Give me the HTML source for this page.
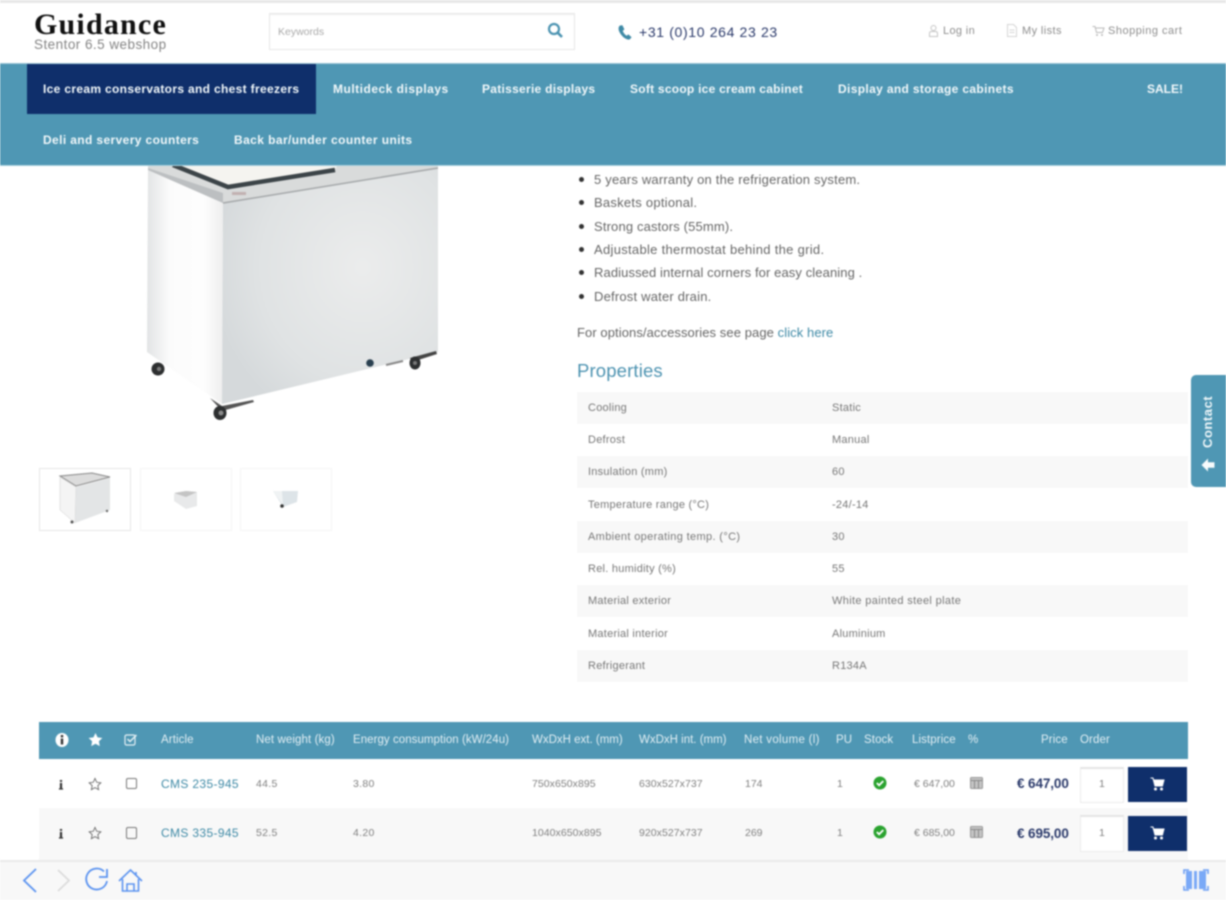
<!DOCTYPE html>
<html lang="en">
<head>
<meta charset="utf-8">
<title>Guidance - Stentor 6.5 webshop</title>
<style>
html,body{margin:0;padding:0;background:#fff;}
body{width:1226px;height:900px;overflow:hidden;position:relative;font-family:"Liberation Sans",sans-serif;color:#555;}
#page{position:absolute;left:0;top:0;width:1226px;height:900px;filter:blur(.75px);overflow:hidden;}
.a{position:absolute;white-space:nowrap;line-height:1;}
.box{position:absolute;}
.nav{color:#f2f8fa;font-weight:bold;font-size:12px;}
.gray{color:#8e8e8e;font-size:11px;}
.li{color:#666;font-size:13px;letter-spacing:.06px;}
.dot{position:absolute;left:579px;width:5px;height:5px;border-radius:50%;background:#333;}
.row{position:absolute;left:577px;width:611px;height:32px;background:#f8f8f8;}
.k,.v{color:#777;font-size:11px;letter-spacing:.25px;}
.th{color:#e3eff4;font-size:11.5px;letter-spacing:.1px;}
.td{color:#808080;font-size:10.5px;}
.link{color:#3f8aa6;}
</style>
</head>
<body>
<div id="page">
  <div class="box" style="left:0;top:0;width:1226px;height:3px;background:#e8e8e8"></div>

  <!-- Header -->
  <div class="a" style="left:34px;top:10px;font-family:'Liberation Serif',serif;font-weight:bold;font-size:30px;color:#111;letter-spacing:1.2px">Guidance</div>
  <div class="a" style="left:34px;top:38px;font-size:13.5px;color:#858585;letter-spacing:.46px">Stentor 6.5 webshop</div>

  <div class="box" style="left:269px;top:13px;width:304px;height:35px;border:1px solid #e8e8e8;box-shadow:inset 0 1px 1px #eee"></div>
  <div class="a" style="left:278px;top:27px;font-size:10.5px;color:#aaa">Keywords</div>
  <svg class="box" style="left:546px;top:21px" width="18" height="18" viewBox="0 0 18 18"><circle cx="8" cy="8" r="5" fill="none" stroke="#4b93b1" stroke-width="2.2"/><path d="M11.800 11.800L16 16" stroke="#4b93b1" stroke-width="2.600"/></svg>

  <svg class="box" style="left:617px;top:24px" width="17" height="17" viewBox="0 0 17 17"><path d="M3 1.500C1 3 1 6 3.600 10c2.600 3.600 6 6 9 5.500l2-2.300-3.200-2.800-1.800 1.400C8 10.800 6.500 9 5.700 6.900L7.400 5.400 5.400 1.200z" fill="#3f8aa6"/></svg>
  <div class="a" style="left:639px;top:25px;font-size:14px;color:#2b3a6b;letter-spacing:.65px">+31 (0)10 264 23 23</div>

  <svg class="box" style="left:928px;top:25px" width="11" height="12" viewBox="0 0 11 12"><circle cx="5.500" cy="3" r="2.500" fill="none" stroke="#c5c5c5"/><path d="M1.500 11.500V8.500q0-2 2-2h4q2 0 2 2v3z" fill="none" stroke="#c5c5c5"/></svg>
  <div class="a gray" style="left:943px;top:26px;letter-spacing:.35px">Log in</div>
  <svg class="box" style="left:1006px;top:24px" width="12" height="13" viewBox="0 0 12 13"><path d="M1.500.5h6l3 3v9h-9zM3.500 6h5M3.500 8.500h5" fill="none" stroke="#d5d5d5"/></svg>
  <div class="a gray" style="left:1022px;top:26px;letter-spacing:.4px">My lists</div>
  <svg class="box" style="left:1092px;top:25px" width="13" height="12" viewBox="0 0 13 12"><path d="M.5 1.500h2.500l1.500 6h6l1.500-4.500h-9" fill="none" stroke="#bbb"/><circle cx="5" cy="10" r="1" fill="#bbb"/><circle cx="10" cy="10" r="1" fill="#bbb"/></svg>
  <div class="a gray" style="left:1108px;top:26px;letter-spacing:.5px">Shopping cart</div>

  <!-- Product image -->
  <svg class="box" style="left:130px;top:150px" width="330" height="285" viewBox="130 150 330 285">
    <defs>
      <linearGradient id="lf" x1="0" x2="1" y1="0" y2="0"><stop offset="0" stop-color="#e2e4e5"/><stop offset=".3" stop-color="#fbfbfb"/><stop offset=".75" stop-color="#fdfdfd"/><stop offset="1" stop-color="#eeeeee"/></linearGradient>
      <radialGradient id="rf" cx=".65" cy=".42" r=".7"><stop offset="0" stop-color="#ebecec"/><stop offset=".7" stop-color="#dfe2e3"/><stop offset="1" stop-color="#d5d9db"/></radialGradient>
    </defs>
    <path d="M148 170L223 203 222 404 147 352z" fill="url(#lf)"/>
    <path d="M223 203L438 168V352L222 404z" fill="url(#rf)"/>
    <path d="M148 160H438V168L223 203 148 170z" fill="#d9dbdb"/>
    <path d="M148 168L223 193V203L148 170z" fill="#bcbfc1"/>
    <path d="M223 203L438 168" fill="none" stroke="#a5a8aa" stroke-width="1.500"/>
    <path d="M165 160H340L335 170 228 186z" fill="#f5f4f0"/>
    <path d="M173 165L228 187 335 170" fill="none" stroke="#3c4448" stroke-width="4.500"/>
    <rect x="232" y="192" width="14" height="3" fill="#a88" opacity=".5"/>
    <path d="M210 398L222 406 253 400 254 402 222 411z" fill="#555"/>
    <ellipse cx="220" cy="413" rx="6.500" ry="7" fill="#2d2f30"/><circle cx="221" cy="413" r="2.500" fill="#8a8a8a"/>
    <ellipse cx="158" cy="369" rx="6.500" ry="6.500" fill="#2d2f30"/><circle cx="159" cy="369" r="2.200" fill="#7a7a7a"/>
    <path d="M410 358L436 351 437 354 412 362z" fill="#444"/>
    <ellipse cx="415" cy="363" rx="5.500" ry="6.500" fill="#2d2f30"/><circle cx="415" cy="363" r="2" fill="#777"/>
    <circle cx="370" cy="363" r="3.800" fill="#2a4050"/>
    <path d="M386 365L403 361" stroke="#888" stroke-width="2"/>
  </svg>

  <!-- Thumbnails -->
  <div class="box" style="left:39px;top:468px;width:90px;height:61px;border:1px solid #e6e6e6"></div>
  <div class="box" style="left:140px;top:468px;width:90px;height:61px;border:1px solid #f5f5f5"></div>
  <div class="box" style="left:240px;top:468px;width:90px;height:61px;border:1px solid #f5f5f5"></div>
  <svg class="box" style="left:55px;top:470px" width="60" height="58" viewBox="55 470 60 58">
    <path d="M60 476L76 486 110 477 92 473z" fill="#dcdcdc" stroke="#888" stroke-width="1"/>
    <path d="M60 477L76 487 75 523 60 510z" fill="#f4f4f4" stroke="#ccc" stroke-width=".5"/>
    <path d="M76 487L110 478V510L75 523z" fill="#e3e5e6"/>
    <circle cx="72" cy="522" r="1.500" fill="#555"/><circle cx="107" cy="511" r="1.200" fill="#666"/>
  </svg>
  <svg class="box" style="left:170px;top:485px" width="30" height="30" viewBox="170 485 30 30">
    <path d="M174 494L186 491 197 492 197 506 186 509 174 501z" fill="#e8e9ea"/>
    <path d="M174 493L186 491 197 492 186 497z" fill="#c4c4c4"/>
  </svg>
  <svg class="box" style="left:270px;top:485px" width="30" height="30" viewBox="270 485 30 30">
    <path d="M273 491H298L297 502 283 507z" fill="#dde4e8"/>
    <path d="M273 491H282L283 505z" fill="#f0f3f4"/>
    <circle cx="282" cy="506" r="1.800" fill="#333"/>
  </svg>

  <!-- Description list -->
  <div class="dot" style="top:177px"></div><div class="a li" style="left:594px;top:173px;letter-spacing:.2px">5 years warranty on the refrigeration system.</div>
  <div class="dot" style="top:200px"></div><div class="a li" style="left:594px;top:196px;letter-spacing:.25px">Baskets optional.</div>
  <div class="dot" style="top:224px"></div><div class="a li" style="left:594px;top:220px;letter-spacing:.15px">Strong castors (55mm).</div>
  <div class="dot" style="top:247px"></div><div class="a li" style="left:594px;top:243px;letter-spacing:.3px">Adjustable thermostat behind the grid.</div>
  <div class="dot" style="top:270px"></div><div class="a li" style="left:594px;top:266px;letter-spacing:.1px">Radiussed internal corners for easy cleaning .</div>
  <div class="dot" style="top:294px"></div><div class="a li" style="left:594px;top:290px;letter-spacing:.2px">Defrost water drain.</div>
  <div class="a li" style="left:577px;top:326px;letter-spacing:.08px">For options/accessories see page <span class="link">click here</span></div>
  <div class="a" style="left:577px;top:362px;font-size:18.5px;color:#4d93b1;letter-spacing:.15px">Properties</div>

  <!-- Properties -->
  <div class="row" style="top:392px"></div>
  <div class="row" style="top:456px"></div>
  <div class="row" style="top:521px"></div>
  <div class="row" style="top:585px"></div>
  <div class="row" style="top:650px"></div>
  <div class="a k" style="left:588px;top:403px">Cooling</div><div class="a v" style="left:832px;top:403px">Static</div>
  <div class="a k" style="left:588px;top:435px">Defrost</div><div class="a v" style="left:832px;top:435px">Manual</div>
  <div class="a k" style="left:588px;top:467px">Insulation (mm)</div><div class="a v" style="left:832px;top:467px">60</div>
  <div class="a k" style="left:588px;top:500px">Temperature range (°C)</div><div class="a v" style="left:832px;top:500px">-24/-14</div>
  <div class="a k" style="left:588px;top:532px;letter-spacing:.35px">Ambient operating temp. (°C)</div><div class="a v" style="left:832px;top:532px">30</div>
  <div class="a k" style="left:588px;top:564px">Rel. humidity (%)</div><div class="a v" style="left:832px;top:564px">55</div>
  <div class="a k" style="left:588px;top:596px">Material exterior</div><div class="a v" style="left:832px;top:596px;letter-spacing:.35px">White painted steel plate</div>
  <div class="a k" style="left:588px;top:629px">Material interior</div><div class="a v" style="left:832px;top:629px">Aluminium</div>
  <div class="a k" style="left:588px;top:661px">Refrigerant</div><div class="a v" style="left:832px;top:661px">R134A</div>

  <!-- Table -->
  <div class="box" style="left:39px;top:722px;width:1149px;height:37px;background:#4f97b4"></div>
  <div class="box" style="left:39px;top:808px;width:1149px;height:52px;background:#f8f8f8"></div>

  <svg class="box" style="left:54px;top:732px" width="16" height="16" viewBox="0 0 16 16"><ellipse cx="8" cy="8" rx="6.500" ry="7" fill="#fff"/><rect x="6.800" y="3" width="2.400" height="2.400" fill="#333"/><rect x="6.800" y="6.500" width="2.400" height="6" fill="#333"/></svg>
  <svg class="box" style="left:88px;top:732px" width="15" height="15" viewBox="0 0 24 24"><path d="M12 1.500l3.300 7 7.700 1-5.600 5.300 1.400 7.700L12 18.800l-6.800 3.700 1.400-7.700L1 9.500l7.700-1z" fill="#fff"/></svg>
  <svg class="box" style="left:124px;top:733px" width="14" height="13" viewBox="0 0 14 13"><rect x="1" y="2" width="10" height="10" rx="1.500" fill="none" stroke="#e6f1f5" stroke-width="1.200"/><path d="M3.500 6l2.500 2.500L12.500 2" fill="none" stroke="#e6f1f5" stroke-width="1.500"/></svg>

  <div class="a th" style="left:161px;top:735px">Article</div>
  <div class="a th" style="left:256px;top:735px">Net weight (kg)</div>
  <div class="a th" style="left:353px;top:735px;letter-spacing:.05px">Energy consumption (kW/24u)</div>
  <div class="a th" style="left:532px;top:735px;letter-spacing:0">WxDxH ext. (mm)</div>
  <div class="a th" style="left:639px;top:735px;letter-spacing:0">WxDxH int. (mm)</div>
  <div class="a th" style="left:744px;top:735px;letter-spacing:.3px">Net volume (l)</div>
  <div class="a th" style="left:836px;top:735px">PU</div>
  <div class="a th" style="left:864px;top:735px">Stock</div>
  <div class="a th" style="left:912px;top:735px">Listprice</div>
  <div class="a th" style="left:968px;top:735px">%</div>
  <div class="a th" style="left:1041px;top:735px">Price</div>
  <div class="a th" style="left:1080px;top:735px">Order</div>

  <!-- Row 1 -->
  <svg class="box" style="left:58px;top:780px" width="6" height="10" viewBox="0 0 7 12"><rect x="2.200" y="0" width="2.600" height="2.200" fill="#333"/><rect x="2.200" y="3.500" width="2.600" height="7" fill="#333"/><rect x="1" y="10" width="5" height="1.500" fill="#333"/></svg>
  <svg class="box" style="left:88px;top:777px" width="14" height="14" viewBox="0 0 24 24"><path d="M12 2.500l3 6.500 7 .9-5.100 4.800 1.300 7L12 18.300l-6.200 3.400 1.300-7L2 9.900 9 9z" fill="none" stroke="#666" stroke-width="1.500"/></svg>
  <div class="box" style="left:126px;top:778px;width:9px;height:9px;border:1px solid #777;border-radius:2px"></div>
  <div class="a link" style="left:161px;top:778px;font-size:12px;letter-spacing:.35px">CMS 235-945</div>
  <div class="a td" style="left:256px;top:779px;letter-spacing:.3px">44.5</div>
  <div class="a td" style="left:353px;top:779px;letter-spacing:.3px">3.80</div>
  <div class="a td" style="left:532px;top:779px;letter-spacing:.05px">750x650x895</div>
  <div class="a td" style="left:639px;top:779px;letter-spacing:.05px">630x527x737</div>
  <div class="a td" style="left:745px;top:779px">174</div>
  <div class="a td" style="left:837px;top:779px">1</div>
  <svg class="box" style="left:873px;top:776px" width="14" height="14" viewBox="0 0 14 14"><circle cx="7" cy="7" r="6.500" fill="#2aa32f"/><path d="M3.800 7l2.300 2.300 4.200-4.300" fill="none" stroke="#fff" stroke-width="1.800"/></svg>
  <div class="a td" style="left:914px;top:779px">€ 647,00</div>
  <svg class="box" style="left:970px;top:777px" width="13" height="12" viewBox="0 0 13 12"><rect x=".5" y=".5" width="12" height="11" rx="1" fill="#c4c4c4" stroke="#999"/><path d="M.5 3.500h12M4.500 3.500v8M8.500 3.500v8" stroke="#888"/></svg>
  <div class="a" style="left:1017px;top:777px;font-size:13.500px;font-weight:bold;color:#2b3a6b;letter-spacing:-.1px">€ 647,00</div>
  <div class="box" style="left:1080px;top:767px;width:42px;height:33px;background:#fff;border:1px solid #ececec;border-top:2px solid #e4e4e4"></div>
  <div class="a td" style="left:1099px;top:779px">1</div>
  <div class="box" style="left:1128px;top:767px;width:59px;height:35px;background:#0f2f6b"></div>
  <svg class="box" style="left:1150px;top:777px" width="15" height="14" viewBox="0 0 15 14"><path d="M.5 1h2.500l.6 2H14l-1.600 6H5L3 1.500" fill="#fff" stroke="#fff"/><circle cx="5.500" cy="12" r="1.500" fill="#fff"/><circle cx="11.500" cy="12" r="1.500" fill="#fff"/></svg>

  <!-- Row 2 -->
  <svg class="box" style="left:58px;top:829px" width="6" height="10" viewBox="0 0 7 12"><rect x="2.200" y="0" width="2.600" height="2.200" fill="#333"/><rect x="2.200" y="3.500" width="2.600" height="7" fill="#333"/><rect x="1" y="10" width="5" height="1.500" fill="#333"/></svg>
  <svg class="box" style="left:88px;top:826px" width="14" height="14" viewBox="0 0 24 24"><path d="M12 2.500l3 6.500 7 .9-5.100 4.800 1.300 7L12 18.300l-6.200 3.400 1.300-7L2 9.900 9 9z" fill="none" stroke="#666" stroke-width="1.500"/></svg>
  <div class="box" style="left:126px;top:827px;width:9px;height:10px;border:1px solid #777;border-radius:2px"></div>
  <div class="a link" style="left:161px;top:827px;font-size:12px;letter-spacing:.35px">CMS 335-945</div>
  <div class="a td" style="left:256px;top:828px;letter-spacing:.3px">52.5</div>
  <div class="a td" style="left:353px;top:828px;letter-spacing:.3px">4.20</div>
  <div class="a td" style="left:532px;top:828px;letter-spacing:.05px">1040x650x895</div>
  <div class="a td" style="left:639px;top:828px;letter-spacing:.05px">920x527x737</div>
  <div class="a td" style="left:745px;top:828px">269</div>
  <div class="a td" style="left:837px;top:828px">1</div>
  <svg class="box" style="left:873px;top:825px" width="14" height="14" viewBox="0 0 14 14"><circle cx="7" cy="7" r="6.500" fill="#2aa32f"/><path d="M3.800 7l2.300 2.300 4.200-4.300" fill="none" stroke="#fff" stroke-width="1.800"/></svg>
  <div class="a td" style="left:914px;top:828px">€ 685,00</div>
  <svg class="box" style="left:970px;top:826px" width="13" height="12" viewBox="0 0 13 12"><rect x=".5" y=".5" width="12" height="11" rx="1" fill="#c4c4c4" stroke="#999"/><path d="M.5 3.500h12M4.500 3.500v8M8.500 3.500v8" stroke="#888"/></svg>
  <div class="a" style="left:1017px;top:827px;font-size:13.500px;font-weight:bold;color:#2b3a6b;letter-spacing:-.1px">€ 695,00</div>
  <div class="box" style="left:1080px;top:815px;width:42px;height:34px;background:#fff;border:1px solid #ececec;border-top:2px solid #e4e4e4"></div>
  <div class="a td" style="left:1099px;top:828px">1</div>
  <div class="box" style="left:1128px;top:816px;width:59px;height:35px;background:#0f2f6b"></div>
  <svg class="box" style="left:1150px;top:826px" width="15" height="14" viewBox="0 0 15 14"><path d="M.5 1h2.500l.6 2H14l-1.600 6H5L3 1.500" fill="#fff" stroke="#fff"/><circle cx="5.500" cy="12" r="1.500" fill="#fff"/><circle cx="11.500" cy="12" r="1.500" fill="#fff"/></svg>

  <!-- Nav bar -->
  <div class="box" style="left:0;top:63px;width:1226px;height:103px;background:#4f97b4;border-top:1px solid #9dc6d6;border-bottom:1px solid #a9d0dd;box-sizing:border-box"></div>
  <div class="box" style="left:27px;top:64px;width:289px;height:50px;background:#0f2f6b"></div>
  <div class="a nav" style="left:43px;top:83px;letter-spacing:.33px">Ice cream conservators and chest freezers</div>
  <div class="a nav" style="left:333px;top:83px;letter-spacing:.5px">Multideck displays</div>
  <div class="a nav" style="left:482px;top:83px;letter-spacing:.28px">Patisserie displays</div>
  <div class="a nav" style="left:630px;top:83px;letter-spacing:.25px">Soft scoop ice cream cabinet</div>
  <div class="a nav" style="left:838px;top:83px;letter-spacing:.35px">Display and storage cabinets</div>
  <div class="a nav" style="left:1147px;top:83px">SALE!</div>
  <div class="a nav" style="left:43px;top:134px;letter-spacing:.38px">Deli and servery counters</div>
  <div class="a nav" style="left:234px;top:134px;letter-spacing:.42px">Back bar/under counter units</div>

  <!-- Contact tab -->
  <div class="box" style="left:1191px;top:375px;width:40px;height:112px;background:#4f97b4;border-radius:5px"></div>
  <div class="a" style="left:1201px;top:448px;font-size:13px;font-weight:bold;color:#eef6f9;transform-origin:0 0;transform:rotate(-90deg);letter-spacing:.55px">Contact</div>
  <svg class="box" style="left:1201px;top:458px" width="14" height="14" viewBox="0 0 14 14"><path d="M7 .5L.5 7 7 13.500V9.800h6.500V4.200H7z" fill="#f7fbfc"/></svg>

  <!-- Bottom browser bar -->
  <div class="box" style="left:0;top:860px;width:1226px;height:40px;background:#f8f8f8;border-top:2px solid #eaeaea;box-sizing:border-box"></div>
  <svg class="box" style="left:0;top:860px" width="150" height="40" viewBox="0 0 150 40">
    <path d="M36 9L24 20.500 36 32" fill="none" stroke="#5b93f0" stroke-width="1.800"/>
    <path d="M58 10L69 20.500 58 31" fill="none" stroke="#dcdcdc" stroke-width="1.800"/>
    <path d="M104 11.500A10.500 10.500 0 1 0 107 21" fill="none" stroke="#5b93f0" stroke-width="1.800"/>
    <path d="M107 9v8h-8" fill="none" stroke="#5b93f0" stroke-width="1.800"/>
    <path d="M119 21L130.500 10 142 21M122.500 19v12h16V19M127 31v-7h7v7M136 12v4" fill="none" stroke="#5b93f0" stroke-width="1.600"/>
  </svg>
  <svg class="box" style="left:1182px;top:868px" width="28" height="24" viewBox="0 0 28 24">
    <path d="M2 6V2h5M21 2h5v4M26 18v4h-5M7 22H2v-4" fill="none" stroke="#6ea0f5" stroke-width="1.600"/>
    <rect x="4" y="3" width="6" height="18" fill="#7aa9f7"/><rect x="12" y="3" width="3" height="18" fill="#7aa9f7"/><rect x="17" y="3" width="7" height="18" fill="#7aa9f7"/>
  </svg>
</div>
</body>
</html>
